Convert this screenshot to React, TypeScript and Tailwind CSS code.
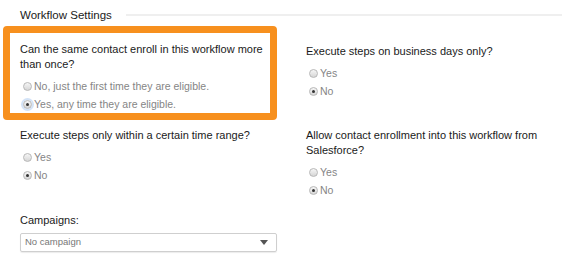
import React from "react";

type Opt = { label: string; checked?: boolean; focus?: boolean };

const Radio = ({ label, checked, focus }: Opt) => (
  <div className="flex items-center h-[18px] pl-[3px]">
    <span
      className={`w-[9px] h-[9px] rounded-full border border-[#b8b8b8] bg-gradient-to-b from-[#f6f6f6] to-[#d6d6d6] flex items-center justify-center ${
        focus ? "shadow-[0_0_0_2px_#d3e3f7]" : ""
      }`}
    >
      {checked && <span className="w-[3px] h-[3px] rounded-full bg-[#333]" />}
    </span>
    <span className="ml-[2px] text-[10.5px] text-[#858585] leading-[18px]">{label}</span>
  </div>
);

const Question = ({ title, options }: { title: string; options: Opt[] }) => (
  <div>
    <p className="text-[11px] leading-[15px] text-[#1a1a1a]">{title}</p>
    <div className="mt-[5px]">
      {options.map((o) => (
        <Radio key={o.label} {...o} />
      ))}
    </div>
  </div>
);

export default function App() {
  return (
    <div
      className="w-[562px] h-[279px] bg-white overflow-hidden"
      style={{ fontFamily: '"Liberation Sans", Arial, sans-serif' }}
    >
      {/* header */}
      <div className="flex items-center pt-[7px] pl-[20px]">
        <span className="text-[11.5px] leading-[16px] text-[#1a1a1a]">Workflow Settings</span>
        <div className="flex-1 ml-[14px] h-[2px] bg-[#efefef]" />
      </div>

      <div className="grid grid-cols-[274px_274px] gap-x-[12px] pl-[3px] mt-[3px]">
        <div className="border-[7px] border-[#f7901e] rounded-[4px] pt-[9px] pl-[10px] pr-[6px]">
          <Question
            title="Can the same contact enroll in this workflow more than once?"
            options={[
              { label: "No, just the first time they are eligible." },
              { label: "Yes, any time they are eligible.", checked: true, focus: true },
            ]}
          />
        </div>
        <div className="pt-[18px] pl-[17px]">
          <Question
            title="Execute steps on business days only?"
            options={[{ label: "Yes" }, { label: "No", checked: true }]}
          />
        </div>

        <div className="pt-[8px] pl-[17px]">
          <Question
            title="Execute steps only within a certain time range?"
            options={[{ label: "Yes" }, { label: "No", checked: true }]}
          />
        </div>
        <div className="pt-[8px] pl-[17px] pr-[10px]">
          <Question
            title="Allow contact enrollment into this workflow from Salesforce?"
            options={[{ label: "Yes" }, { label: "No", checked: true }]}
          />
        </div>

        {/* campaigns */}
        <div className="pt-[14px] pl-[17px]">
          <p className="text-[11px] leading-[15px] text-[#1a1a1a]">Campaigns:</p>
          <div className="mt-[5px] h-[19px] border border-[#cfcfcf] rounded-[2px] shadow-[0_1px_1px_rgba(0,0,0,0.08)] flex items-center justify-between pl-[4px] pr-[8px]">
            <span className="text-[9.5px] text-[#777]">No campaign</span>
            <span className="w-0 h-0 border-l-[4px] border-r-[4px] border-t-[5px] border-l-transparent border-r-transparent border-t-[#555]" />
          </div>
        </div>
      </div>
    </div>
  );
}
